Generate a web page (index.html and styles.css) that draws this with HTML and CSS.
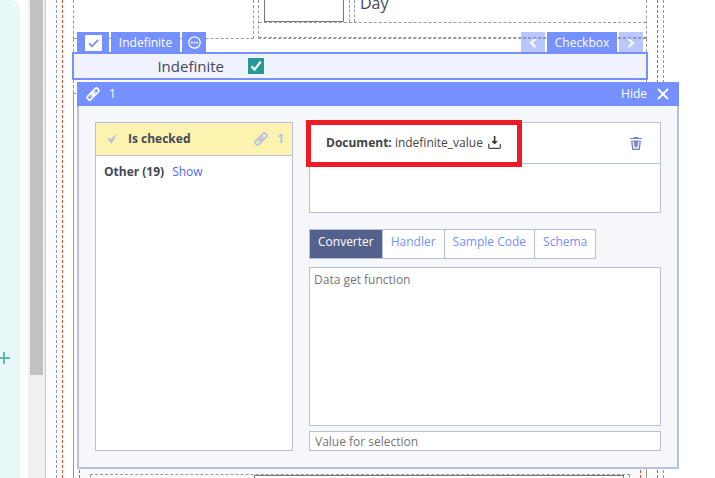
FILE: index.html
```html
<!DOCTYPE html>
<html lang="en">
<head>
<meta charset="utf-8">
<title>Form editor</title>
<link rel="stylesheet" href="styles.css">
</head>
<body>
<svg class="defs" aria-hidden="true">
  <symbol id="link" viewBox="0 0 14 14">
    <g fill="none" stroke="currentColor" stroke-width="1.8" transform="rotate(-45 7 7)">
      <rect x="0" y="4.800" width="7.500" height="4.400" rx="1.600"/>
      <rect x="6.500" y="4.800" width="7.500" height="4.400" rx="1.600"/>
      <path d="M3.500 7h7" stroke-width="1.200"/>
    </g>
  </symbol>
</svg>
<aside class="side"><button class="add" aria-label="Add"><svg width="12" height="12" viewBox="0 0 12 12"><path d="M6 0v12M0 6h12" stroke="currentColor" stroke-width="2"/></svg></button></aside>
<div class="track"><div class="thumb"></div></div>
<main class="canvas">
  <div class="frame">
    <div class="page">
      <div class="form">
        <div class="row">
          <div class="cell-left"></div>
          <div class="cell-right">
            <div class="group">
              <div class="day-slot"><div class="day-box"></div></div>
              <div class="day-label">Day</div>
            </div>
            <div class="group-end"></div>
          </div>
        </div>
        <div class="slot">
        <section class="selected">
          <div class="tools tools-left">
            <button class="tag tag-check" aria-label="Select element"><svg width="17" height="16" viewBox="0 0 17 16"><rect width="17" height="16" rx="1" fill="#fff"/><path d="M4 8.3l3 3L13.2 4.8" fill="none" stroke="#7590ff" stroke-width="1.8"/></svg></button>
            <button class="tag tag-name">Indefinite</button>
            <button class="tag tag-icon" aria-label="More"><svg width="13" height="13" viewBox="0 0 13 13"><circle cx="6.5" cy="6.5" r="5.7" fill="none" stroke="#fff" stroke-width="1.2"/><path d="M3 5.8h1.7v1.6H3zM5.7 5.8h1.6v1.6H5.7zM8.3 5.8H10v1.6H8.3z" fill="#fff"/></svg></button>
          </div>
          <div class="tools tools-right">
            <button class="tag tag-icon faded" aria-label="Previous"><svg width="8" height="10" viewBox="0 0 8 10"><path d="M6.5 1L2 5l4.500 4" fill="none" stroke="#fff" stroke-width="2"/></svg></button>
            <button class="tag tag-type">Checkbox</button>
            <button class="tag tag-icon faded" aria-label="Next"><svg width="8" height="10" viewBox="0 0 8 10"><path d="M1.500 1L6 5 1.500 9" fill="none" stroke="#fff" stroke-width="2"/></svg></button>
          </div>
          <label class="field-label" for="indefinite">Indefinite</label>
          <input class="check" type="checkbox" id="indefinite" checked>
          <svg class="tick" width="16" height="16" viewBox="0 0 16 16"><path d="M3.500 8.300l3 3.300 6.200-7.800" fill="none" stroke="#fff" stroke-width="2.200"/></svg>
          <div class="popup">
            <header class="popup-head">
              <svg width="14" height="14"><use href="#link"/></svg>
              <span class="count">1</span>
              <button class="hide">Hide<svg width="12" height="12" viewBox="0 0 12 12"><path d="M1 1l10 10M11 1L1 11" stroke="#fff" stroke-width="1.800"/></svg></button>
            </header>
            <div class="popup-body">
              <div class="states">
                <div class="state">
                  <svg width="10" height="10" viewBox="0 0 10 10"><path d="M0.500 4L4 5.200 9.500 0.500 4.500 9.500z" fill="#b7c1dc" stroke="#b7c1dc" stroke-width="0.600"/></svg>
                  <b>Is checked</b>
                  <span class="links"><svg width="14" height="14"><use href="#link"/></svg><b>1</b></span>
                </div>
                <div class="other"><b>Other (19)</b><a href="#show">Show</a></div>
              </div>
              <div class="details">
                <div class="binding">
                  <div class="binding-head">
                    <span class="doc"><b>Document:</b> indefinite_value <svg width="13" height="13" viewBox="0 0 13 13"><path d="M0.700 8v3.300q0 1 1 1h9.600q1 0 1-1V8" fill="none" stroke="#444" stroke-width="1.200"/><path d="M5.800 0h1.600v5H9.800L6.600 8.500 3.400 5h2.400z" fill="#333"/></svg></span>
                    <button class="trash" aria-label="Delete"><svg width="12" height="13" viewBox="0 0 12 13"><path d="M0 1.500h12M3.500 0.500h5" stroke="#7884bd"/><path d="M1.700 4h8.600L9.300 12.300H2.700z" fill="#e1e5f4" stroke="#7884bd" stroke-width="1.200"/><path d="M4 4h4l-0.700 6H4.700z" fill="#7884bd"/></svg></button>
                    <div class="highlight"></div>
                  </div>
                </div>
                <nav class="tabs">
                  <button class="tab active">Converter</button><button class="tab">Handler</button><button class="tab">Sample Code</button><button class="tab">Schema</button>
                </nav>
                <textarea class="code" aria-label="Data get function" placeholder="Data get function"></textarea>
                <input class="value" type="text" aria-label="Value for selection" placeholder="Value for selection">
              </div>
            </div>
          </div>
        </section>
        </div>
        <section class="next">
          <div class="next-page"><div class="next-row"><div class="next-box"></div></div></div>
        </section>
      </div>
    </div>
  </div>
</main>
</body>
</html>
```
FILE: styles.css
```css
* { box-sizing: border-box; }
body {
  margin: 0;
  height: 100vh;
  overflow: hidden;
  display: flex;
  background: #fff;
  color: #444857;
  font: 12px/18px "Open Sans", sans-serif;
}
svg { display: block; flex: none; }
.defs { position: absolute; width: 0; height: 0; }
button, input, textarea { font: inherit; margin: 0; }
button { border: 0; padding: 0; background: none; color: inherit; cursor: pointer; }

.side {
  width: 20px;
  margin-right: 8px;
  background: #e8f7f7;
  border-top-right-radius: 10px;
  position: relative;
}
.add { position: absolute; left: -2px; top: 352px; color: #65b9b5; }
.track {
  width: 18px;
  padding: 0 2px;
  background: #f0f0f0;
  border-right: 1px solid #c8c8c8;
}
.thumb { height: 375px; background: #c1c1c1; }

.canvas { flex: 1; padding: 0 51px 0 10px; }
.frame { height: 100%; padding: 0 5px; border: dashed #999; border-width: 0 1px; }
.page { height: 100%; padding: 0 10px; border: dashed #dd4b39; border-width: 0 1px; }
.form { height: 100%; display: flex; flex-direction: column; }
.row {
  flex: none;
  display: flex;
  gap: 4px;
  height: 39px;
  border: dashed #999;
  border-width: 0 1px;
}
.cell-left { width: 180px; border: 1px dashed #999; border-width: 0 1px 1px 0; }
.cell-right {
  flex: 1;
  display: flex;
  flex-direction: column;
  border: dashed #999;
  border-width: 0 0 1px 1px;
}
.group { display: flex; gap: 4px; height: 23px; border-bottom: 1px dashed #999; }
.group-end { flex: 1; border-bottom: 1px dashed #999; }
.day-slot { width: 91px; padding-left: 5px; border-right: 1px dashed #999; }
.day-box { width: 80px; height: 22px; border: solid #777; border-width: 0 1px 1px; }
.day-label {
  flex: 1;
  padding-left: 5px;
  border-left: 1px dashed #999;
  font-size: 16px;
  line-height: 6px;
}

.slot {
  flex: none;
  height: 54px;
  padding-top: 13px;
  border: dashed #999;
  border-width: 0 1px;
}
.selected {
  position: relative;
  display: flex;
  align-items: center;
  height: 28px;
  margin: 0 -2px;
  border: 2px solid #7590ff;
  background: #f0f3ff;
}
.tools { position: absolute; bottom: 100%; display: flex; gap: 2px; }
.tools-left { left: 3px; }
.tools-right { right: 3px; }
.tag {
  display: flex;
  align-items: center;
  justify-content: center;
  height: 22px;
  padding-bottom: 1px;
  background: #7590ff;
  color: #fff;
}
.tag-check { width: 32px; }
.tag-name { width: 69px; }
.tag-type { width: 70px; }
.tag-icon { width: 24px; }
.faded { background: rgba(117, 144, 255, .5); }
.field-label { width: 150px; text-align: right; font-size: 15px; }
.check {
  appearance: none;
  width: 16px;
  height: 16px;
  margin-left: 24px;
  background: #26999b;
}
.tick { margin-left: -16px; z-index: 0; pointer-events: none; }

.popup { position: absolute; top: 28px; left: 3px; right: -33px; z-index: 1; }
.popup-head {
  display: flex;
  align-items: center;
  height: 24px;
  padding: 0 10px 0 9px;
  background: #7590ff;
  color: #fff;
}
.count { margin-left: 9px; }
.hide { margin-left: auto; display: flex; align-items: center; gap: 10px; }
.popup-body {
  display: flex;
  gap: 16px;
  padding: 16px;
  border: solid #b7c1dc;
  border-width: 0 2px 2px;
  background: #f5f7fb;
}
.states { width: 198px; border: 1px solid #b7c1dc; background: #fff; }
.state {
  display: flex;
  align-items: center;
  height: 33px;
  padding: 0 8px 0 11px;
  gap: 11px;
  border-bottom: 1px solid #b7c1dc;
  background: #fdf3b1;
}
.links { margin-left: auto; display: flex; align-items: center; gap: 9px; color: #b7c1dc; }
.other { display: flex; gap: 8px; padding: 7px 8px; }
.other a { color: #4a6cf0; text-decoration: none; }
.details { flex: 1; display: flex; flex-direction: column; }
.binding { height: 91px; border: 1px solid #b7c1dc; background: #fff; }
.binding-head {
  position: relative;
  display: flex;
  align-items: center;
  justify-content: space-between;
  height: 41px;
  padding: 0 18px 0 16px;
  border-bottom: 1px solid #b7c1dc;
}
.doc { color: #444; white-space: pre; }
.doc svg { display: inline-block; margin-left: 2px; vertical-align: -2px; }
.highlight {
  position: absolute;
  left: -4px;
  top: -3px;
  width: 216px;
  height: 47px;
  border: 5px solid #ed1c24;
}
.tabs {
  display: flex;
  align-self: flex-start;
  height: 30px;
  margin: 16px 0 8px;
  border: 1px solid #b7c1dc;
  background: #fff;
}
.tab { padding: 0 8px 4px; color: #7590ff; }
.tab + .tab { border-left: 1px solid #b7c1dc; }
.tab.active { background: #54618c; color: #fff; }
.code, .value {
  width: 100%;
  border: 1px solid #b7c1dc;
  border-radius: 0;
  background: #fff;
  outline: 0;
}
.code { height: 159px; padding: 3px 4px; resize: none; }
.value { height: 20px; margin-top: 5px; padding: 0 5px; }
::placeholder { color: #757575; opacity: 1; }

.next {
  flex: 1;
  min-height: 0;
  border: 1px solid #999;
  border-top-style: dashed;
  border-bottom: 0;
  padding: 0 5px;
}
.next-page {
  height: 100%;
  padding: 380px 10px 0;
  border: dashed #dd4b39;
  border-width: 0 1px;
  background: #f9f9f9;
}
.next-row { height: 10px; padding: 0 5px 0 163px; border: 1px dashed #999; border-bottom: 0; }
.next-box { height: 10px; border: 1px solid #777; border-bottom: 0; background: #fff; }
```
